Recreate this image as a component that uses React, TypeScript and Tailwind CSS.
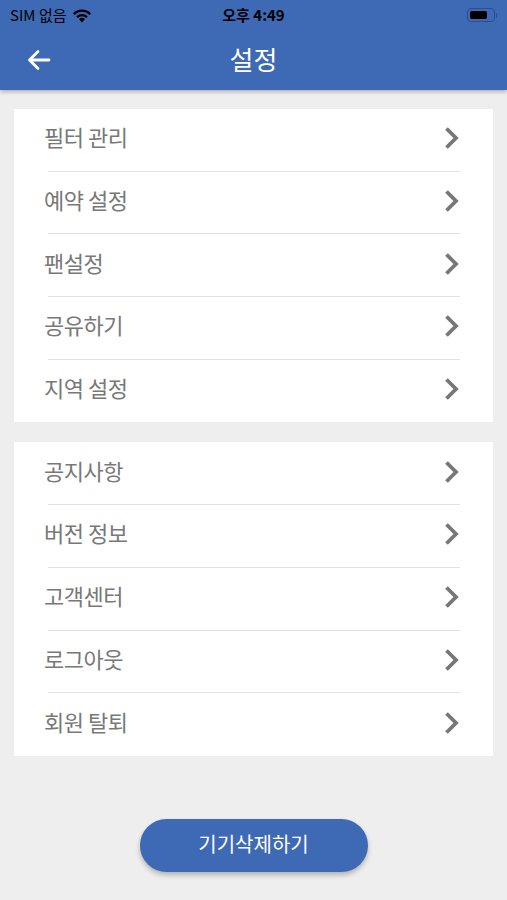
import React from "react";

const font = { fontFamily: '"Noto Sans CJK KR", "Noto Sans", sans-serif' };

function Chevron() {
  return (
    <svg width="17" height="26" viewBox="0 0 17 26" className="shrink-0">
      <path d="M3.5 3.5 L13 13 L3.5 22.5" fill="none" stroke="#777777" strokeWidth="3.8" strokeLinecap="butt" strokeLinejoin="miter" />
    </svg>
  );
}

function Row({ label, last }: { label: string; last?: boolean }) {
  return (
    <div className="relative h-[62.7px] flex items-center pl-[30px] pr-[33px] pb-[4px]">
      <span className="flex-1 text-[22px] text-[#787878] tracking-[-0.5px] pb-[3px]" style={font}>{label}</span>
      <Chevron />
      {!last && <div className="absolute left-[34px] right-[33px] bottom-0 h-px bg-[#e2e2e2]" />}
    </div>
  );
}

function Card({ items }: { items: string[] }) {
  return (
    <div className="mx-[14px] bg-white">
      {items.map((t, i) => (
        <Row key={t} label={t} last={i === items.length - 1} />
      ))}
    </div>
  );
}

export default function App() {
  return (
    <div className="w-[507px] h-[900px] bg-[#eeeeee] flex flex-col overflow-hidden" style={font}>
      <div className="bg-[#3e69b4] shadow-[0_2px_4px_rgba(0,0,0,0.25)] relative z-10">
        <div className="h-[30px] relative flex items-center px-[10px]">
          <div className="flex items-center gap-[6px]">
            <span className="text-[15px] text-black">SIM 없음</span>
            <svg width="20" height="15" viewBox="0 0 20 15">
              <path d="M10 14.5 L7 11 A4.5 4.5 0 0 1 13 11 Z" fill="#000" />
              <path d="M4.2 8.2 A8.5 8.5 0 0 1 15.8 8.2 L14.2 9.9 A6.2 6.2 0 0 0 5.8 9.9 Z" fill="#000" />
              <path d="M1 5.2 A12.8 12.8 0 0 1 19 5.2 L17.4 6.9 A10.5 10.5 0 0 0 2.6 6.9 Z" fill="#000" />
            </svg>
          </div>
          <span className="absolute left-0 right-0 text-center text-[15px] font-bold text-black pointer-events-none">오후 4:49</span>
          <div className="ml-auto flex items-center">
            <div className="w-[28px] h-[14px] rounded-[4px] border border-[#2c4f8a] p-[2px]">
              <div className="w-[17px] h-full rounded-[2px] bg-black" />
            </div>
            <div className="w-[1.5px] h-[5px] bg-[#2c4f8a] ml-[1px] rounded-r" />
          </div>
        </div>
        <div className="h-[60px] relative flex items-center px-[26px]">
          <svg width="26" height="22" viewBox="0 0 26 22">
            <path d="M23 11 H4 M12 2.5 L3.5 11 L12 19.5" fill="none" stroke="#fff" strokeWidth="2.8" strokeLinecap="round" strokeLinejoin="round" />
          </svg>
          <span className="absolute left-0 right-0 text-center text-white text-[26px] pointer-events-none leading-none pb-[2px]">설정</span>
        </div>
      </div>
      <div className="pt-[19px] flex flex-col gap-[20px]">
        <Card items={["필터 관리", "예약 설정", "팬설정", "공유하기", "지역 설정"]} />
        <Card items={["공지사항", "버전 정보", "고객센터", "로그아웃", "회원 탈퇴"]} />
      </div>
      <div className="flex justify-center mt-[63px]">
        <button className="w-[228px] h-[53px] rounded-full bg-[#3e69b4] text-white text-[20px] pb-[3px] shadow-[0_3px_5px_rgba(0,0,0,0.25)]">
          기기삭제하기
        </button>
      </div>
    </div>
  );
}
